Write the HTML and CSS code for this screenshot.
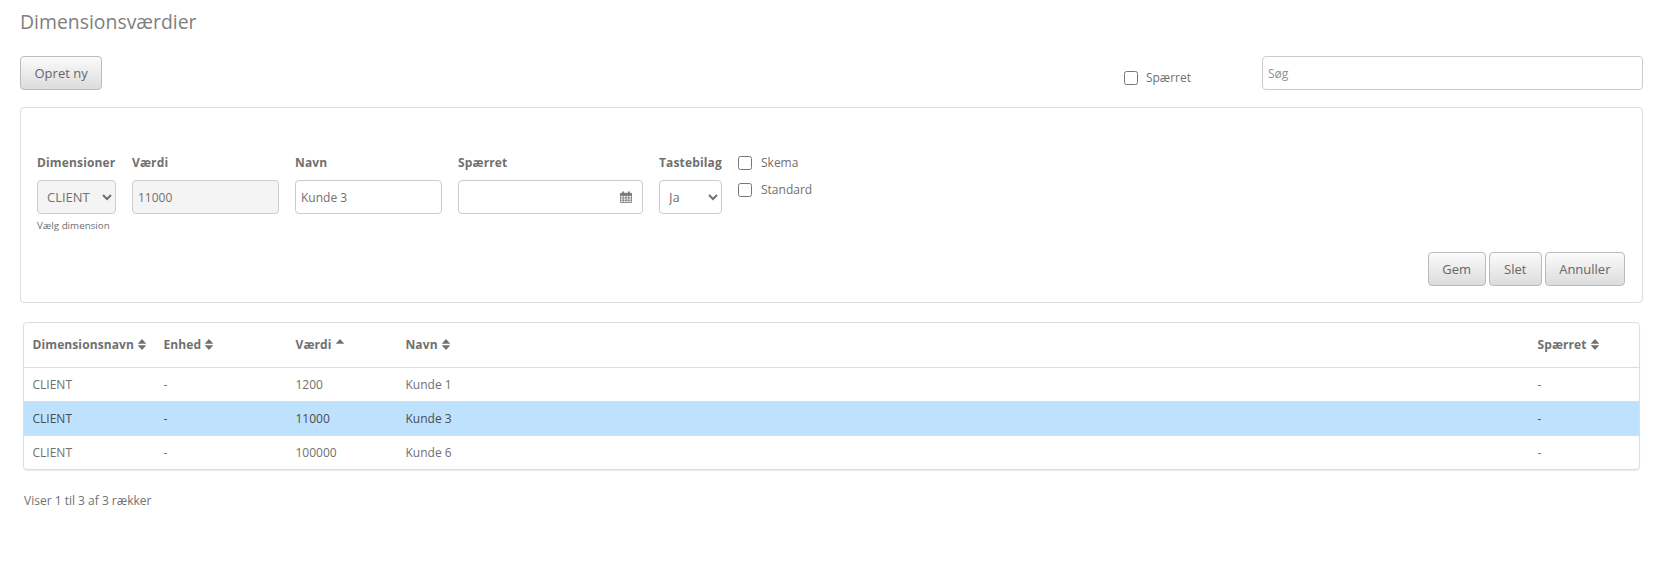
FILE: index.html
```html
<!DOCTYPE html>
<html lang="en">
<head>
    <meta charset="UTF-8">
    <meta name="viewport" content="width=device-width, initial-scale=1.0">
    <title>Dimensionsværdier</title>
    <link rel="stylesheet" href="styles.css">
</head>
<body>
    <svg class="icon-defs" width="0" height="0">
        <symbol id="sort" viewBox="0 0 10 14"><path d="M5 1 9.6 6.1H0.4ZM5 13 0.4 7.9H9.6Z" stroke-linejoin="round"/></symbol>
        <symbol id="sort-up" viewBox="0 0 10 14"><path d="M5 1 9.6 6.1H0.4Z" stroke-linejoin="round"/></symbol>
    </svg>

    <h1 class="page-title">Dimensionsværdier</h1>

    <div class="toolbar">
        <button class="btn">Opret ny</button>
        <div class="toolbar-right">
            <label class="check check-blocked"><input type="checkbox"><span>Spærret</span></label>
            <input class="input search" type="text" placeholder="Søg">
        </div>
    </div>

    <div class="panel">
        <div class="form-row">
            <div class="field field-dim">
                <label>Dimensioner</label>
                <select class="input select" disabled><option>CLIENT</option></select>
                <small>Vælg dimension</small>
            </div>
            <div class="field field-value">
                <label>Værdi</label>
                <input class="input" type="text" value="11000" disabled>
            </div>
            <div class="field field-name">
                <label>Navn</label>
                <input class="input" type="text" value="Kunde 3">
            </div>
            <div class="field field-date">
                <label>Spærret</label>
                <div class="date-wrap">
                    <input class="input" type="text">
                    <svg class="calendar" viewBox="0 0 13 13" width="12" height="12"><path d="M0.5 2.5h12v10h-12zM0.5 5h12M3.5 5v7.5M6.5 5v7.5M9.5 5v7.5M0.5 7.5h12M0.5 10h12" fill="none" stroke="#777" stroke-width="0.9"/><path d="M0.5 2.5h12V5h-12zM2.5 0.5h2v3h-2zM8.5 0.5h2v3h-2z" fill="#777"/></svg>
                </div>
            </div>
            <div class="field field-voucher">
                <label>Tastebilag</label>
                <select class="input select"><option>Ja</option></select>
            </div>
            <div class="check-col">
                <label class="check"><input type="checkbox"><span>Skema</span></label>
                <label class="check"><input type="checkbox"><span>Standard</span></label>
            </div>
        </div>
        <div class="panel-actions">
            <button class="btn btn-gem">Gem</button>
            <button class="btn btn-slet">Slet</button>
            <button class="btn">Annuller</button>
        </div>
    </div>

    <div class="table-box">
        <table class="data-table">
            <thead>
                <tr>
                    <th class="col-dim">Dimensionsnavn <svg class="sort-icon"><use href="#sort"/></svg></th>
                    <th class="col-unit">Enhed <svg class="sort-icon"><use href="#sort"/></svg></th>
                    <th class="col-value">Værdi <svg class="sort-icon"><use href="#sort-up"/></svg></th>
                    <th>Navn <svg class="sort-icon"><use href="#sort"/></svg></th>
                    <th class="col-blocked">Spærret <svg class="sort-icon"><use href="#sort"/></svg></th>
                </tr>
            </thead>
            <tbody>
                <tr><td>CLIENT</td><td>-</td><td>1200</td><td>Kunde 1</td><td>-</td></tr>
                <tr class="selected"><td>CLIENT</td><td>-</td><td>11000</td><td>Kunde 3</td><td>-</td></tr>
                <tr><td>CLIENT</td><td>-</td><td>100000</td><td>Kunde 6</td><td>-</td></tr>
            </tbody>
        </table>
    </div>

    <div class="table-info">Viser 1 til 3 af 3 rækker</div>
</body>
</html>
```

FILE: styles.css
```css
* {
    margin: 0;
    padding: 0;
    box-sizing: border-box;
}

body {
    font-family: "Open Sans", sans-serif;
    font-size: 12px;
    color: #707070;
    background-color: #fff;
    padding: 0 18px 0 20px;
}

.icon-defs {
    position: absolute;
}

.page-title {
    font-size: 19.4px;
    font-weight: 400;
    color: #808080;
    line-height: 24px;
    padding-top: 10px;
}

.toolbar {
    display: flex;
    justify-content: space-between;
    margin-top: 22px;
}

.toolbar-right {
    display: flex;
    gap: 71px;
}

.btn {
    height: 34px;
    padding: 0 13.5px;
    font-family: inherit;
    font-size: 13px;
    color: #666;
    background: linear-gradient(#fbfbfb, #dcdcdc);
    border: 1px solid #bbb;
    border-radius: 4px;
}

.btn-gem {
    width: 58px;
}

.btn-slet {
    width: 53px;
}

.input {
    display: block;
    width: 100%;
    height: 34px;
    padding: 0 5px;
    font-family: inherit;
    font-size: 12px;
    color: #707070;
    background-color: #fff;
    border: 1px solid #ccc;
    border-radius: 4px;
    outline: none;
}

.input:disabled {
    color: #707070;
    background-color: #f4f4f4;
    opacity: 1;
}

.input::placeholder {
    color: #909090;
}

.search {
    width: 381px;
}

.select {
    padding: 0 5px;
    font-size: 13px;
}

.check {
    display: flex;
    align-items: center;
    gap: 8px;
    line-height: 16px;
}

.check input {
    width: 14px;
    height: 14px;
    margin: 0;
}

.check-blocked {
    margin-top: 14px;
    align-self: flex-start;
}

.check-col .check {
    gap: 9px;
}

.panel {
    margin-top: 17px;
    height: 196px;
    padding: 45px 17px 0 16px;
    border: 1px solid #ddd;
    border-radius: 4px;
    display: flex;
    flex-direction: column;
}

.form-row {
    display: flex;
    gap: 16px;
}

.field label {
    display: block;
    font-weight: 700;
    letter-spacing: 0.15px;
    line-height: 20px;
    margin-bottom: 7px;
}

.field small {
    display: block;
    font-size: 9.8px;
    margin-top: 5px;
}

.field-dim {
    width: 79px;
}

.field-value,
.field-name {
    width: 147px;
}

.field-date {
    width: 185px;
}

.date-wrap {
    position: relative;
}

.calendar {
    position: absolute;
    top: 11px;
    right: 11px;
}

.field-voucher {
    width: 63px;
}

.check-col {
    display: flex;
    flex-direction: column;
    gap: 11px;
    padding-top: 2px;
}

.panel-actions {
    display: flex;
    justify-content: flex-end;
    gap: 3px;
    margin-top: auto;
    padding-bottom: 16px;
}

.table-box {
    margin: 19px 3px 0 3px;
    border: 1px solid #ddd;
    border-radius: 4px;
    box-shadow: 0 1px 1px rgba(0, 0, 0, 0.08);
    overflow: hidden;
}

.data-table {
    width: 100%;
    border-collapse: collapse;
    table-layout: fixed;
}

.data-table th {
    height: 44px;
    padding: 0 8.5px;
    font-weight: 700;
    letter-spacing: 0.1px;
    text-align: left;
    white-space: nowrap;
    border-bottom: 1px solid #ddd;
}

.data-table td {
    height: 34px;
    padding: 0 8.5px;
    border-bottom: 1px solid #ddd;
}

.data-table tr:last-child td {
    border-bottom: none;
}

.data-table .selected td {
    color: #4c4c4c;
    background-color: #bee1fd;
}

.col-dim {
    width: 131px;
}

.col-unit {
    width: 132px;
}

.col-value {
    width: 110px;
}

.col-blocked {
    width: 110px;
}

.sort-icon {
    width: 10px;
    height: 13px;
    vertical-align: -2px;
    fill: #707070;
}

.table-info {
    margin: 23px 4px 0;
    line-height: 16px;
}
```
